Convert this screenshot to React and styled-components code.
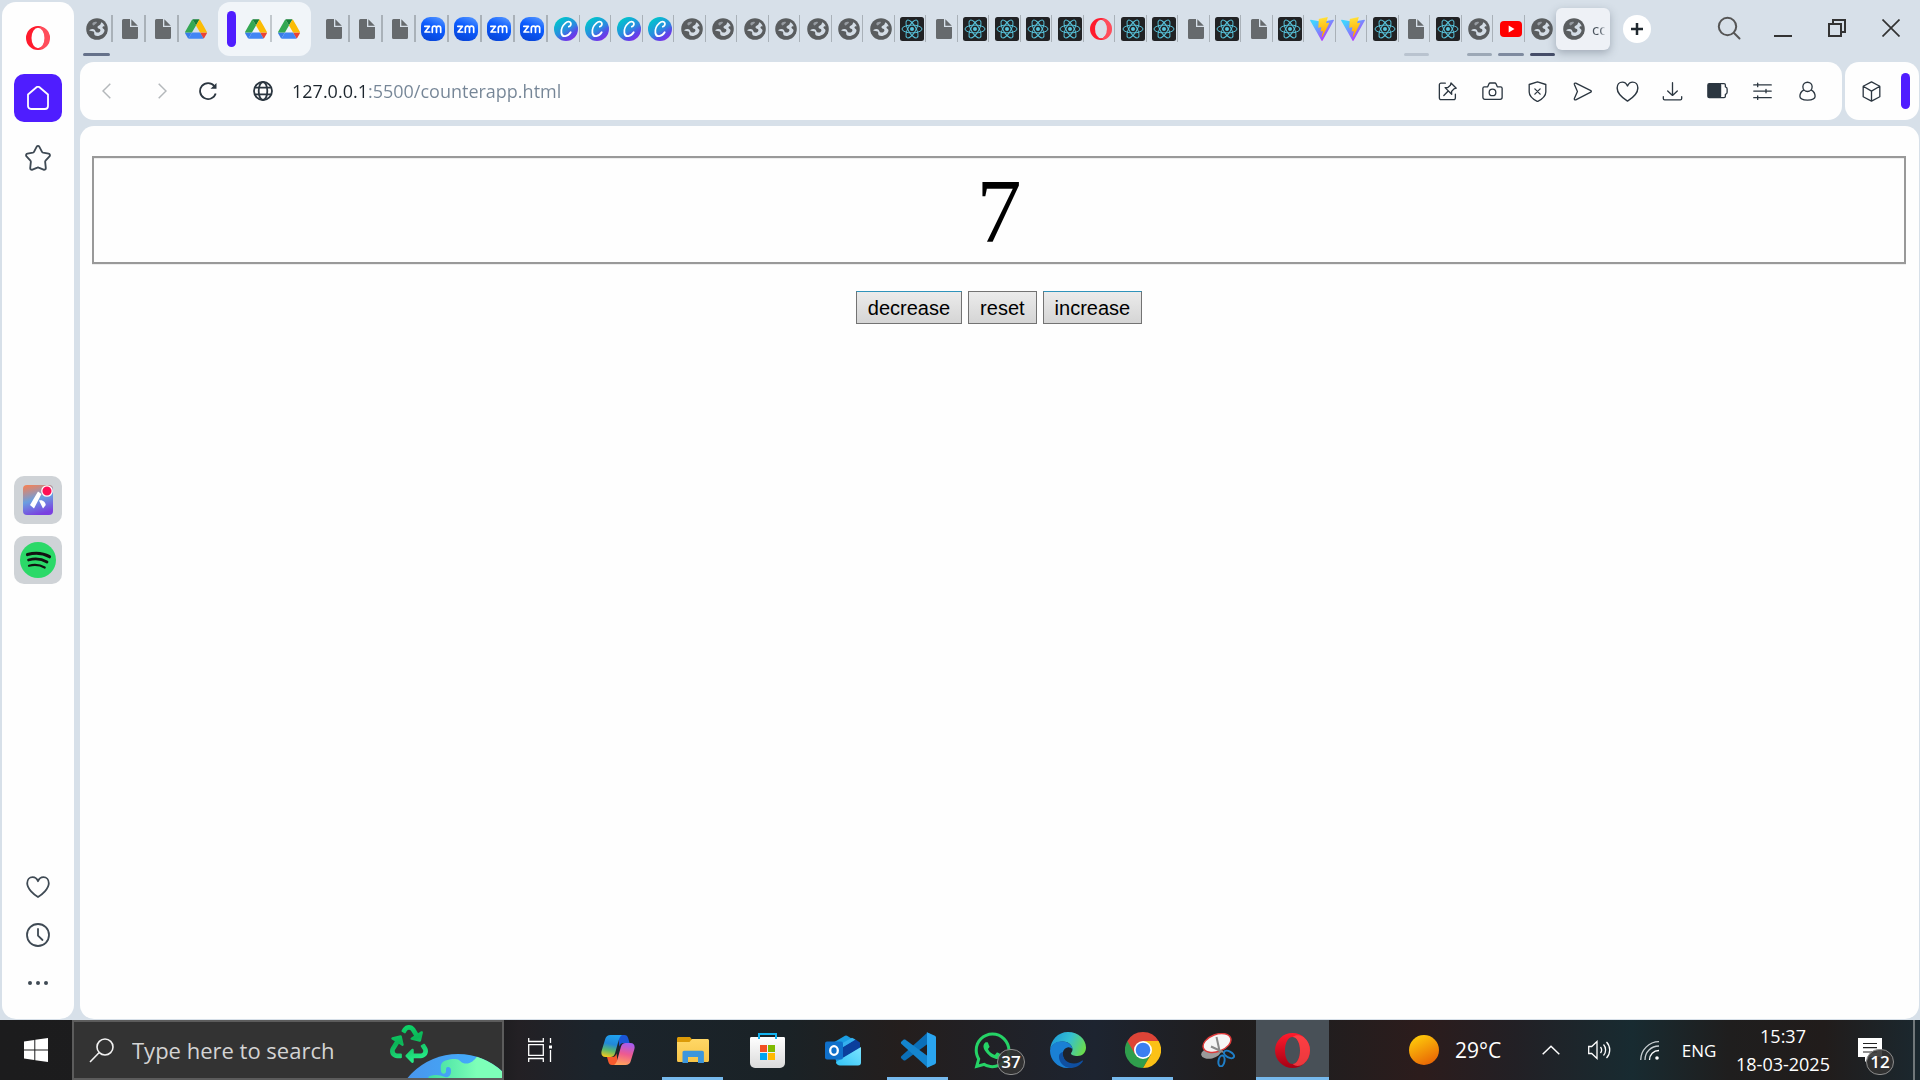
import React, { useState } from "react";
import styled, { createGlobalStyle, css } from "styled-components";
import { FaWhatsapp, FaRecycle } from "react-icons/fa";

const ui = `"Open Sans", "Noto Sans", sans-serif`;
const ink = "#2b3640";

const GlobalStyle = createGlobalStyle`
  * { box-sizing: border-box; }
  body { margin: 0; font-family: ${ui}; }
  button, input { margin: 0; padding: 0; border: 0; background: none; font: inherit; color: inherit; }
  svg { display: block; flex: none; }
`;

/* ---------- layout ---------- */
const Screen = styled.div`
  display: flex;
  flex-direction: column;
  height: 100vh;
  overflow: hidden;
`;
const BrowserWindow = styled.div`
  flex: 1;
  min-height: 0;
  display: flex;
  gap: 6px;
  padding: 0 1px 1px 2px;
  background: #d7e0e9;
`;
const Sidebar = styled.nav`
  flex: 0 0 72px;
  display: flex;
  flex-direction: column;
  justify-content: space-between;
  margin-top: 2px;
  padding: 12px 0;
  border-radius: 14px;
  background: #fefefe;
`;
const SideGroup = styled.div`
  display: flex;
  flex-direction: column;
  align-items: center;
  gap: ${(p) => p.$gap || 0}px;
  padding-top: ${(p) => p.$top || 0}px;
`;
const SideButton = styled.button`
  display: grid;
  place-items: center;
  width: 48px;
  height: 48px;
  border-radius: 10px;
  color: #3f4a54;
  background: ${(p) => p.$fill || "transparent"};
`;
const MainColumn = styled.div`
  flex: 1;
  min-width: 0;
  display: flex;
  flex-direction: column;
`;

/* ---------- tab strip ---------- */
const TitleBar = styled.header`
  display: flex;
  align-items: flex-start;
  height: 62px;
  padding-right: 1px;
`;
const Tabs = styled.div`
  flex: ${(p) => (p.$grow ? 1 : "none")};
  min-width: 0;
  display: flex;
`;
const Tab = styled.button`
  display: flex;
  flex-direction: column;
  justify-content: space-between;
  height: 56px;
  padding-top: 15px;
  ${(p) => (p.$narrow ? css`flex: 1; min-width: 0;` : css`width: 33px;`)}
`;
const TabFace = styled.span`
  display: grid;
  place-items: center;
  align-self: stretch;
  height: 27px;
  padding-left: ${(p) => (p.$narrow ? 5 : 3)}px;
  border-right: ${(p) => (p.$narrow ? 1 : 2)}px solid ${(p) => (p.$divider ? "#a9b1b8" : "transparent")};
`;
const TabLine = styled.span`
  height: 3px;
  align-self: stretch;
  margin-left: ${(p) => (p.$narrow ? 5 : 3)}px;
  margin-right: ${(p) => (p.$narrow ? 1 : 3)}px;
  border-radius: 2px;
  background: ${(p) => p.$tone || "transparent"};
`;
const Island = styled.div`
  flex: none;
  display: flex;
  align-items: flex-start;
  height: 54px;
  margin: 2px 6px 0;
  padding: 0 5px 0 9px;
  border-radius: 12px;
  background: #f1f5f9;
`;
const IslandTab = styled.button`
  display: grid;
  place-items: center;
  width: ${(p) => (p.$divider ? 36 : 34)}px;
  height: 27px;
  margin-top: 13px;
  ${(p) => p.$divider && css`padding-left: 6px; border-right: 2px solid #c2c8cd;`}
`;
const Grip = styled.span`
  flex: none;
  width: 9px;
  height: 36px;
  margin-top: ${(p) => p.$top || 0}px;
  border-radius: 5px;
  background: #4f1dff;
`;
const ActiveTab = styled.button`
  flex: none;
  display: flex;
  align-items: center;
  gap: 7px;
  width: 54px;
  height: 42px;
  margin-top: 8px;
  padding: 0 0 0 7px;
  border-radius: 6px;
  background: #eef1f6;
  box-shadow: 0 3px 8px rgba(60, 72, 90, 0.35);
`;
const TabTitle = styled.span`
  flex: 1;
  min-width: 0;
  white-space: nowrap;
  text-align: left;
  font-size: 15px;
  color: #4a545e;
  mask-image: linear-gradient(90deg, #000 45%, transparent 75%);
`;
const NewTab = styled.button`
  flex: none;
  display: grid;
  place-items: center;
  width: 28px;
  height: 28px;
  margin: 15px 51px 0 13px;
  border-radius: 50%;
  background: #fff;
`;
const WindowButton = styled.button`
  flex: none;
  display: grid;
  place-items: center;
  width: 54px;
  height: 56px;
`;

/* ---------- address bar ---------- */
const Bars = styled.div`
  display: flex;
  gap: 3px;
  height: 58px;
  margin-bottom: 6px;
`;
const Bar = styled.div`
  flex: ${(p) => (p.$grow ? 1 : "none")};
  min-width: 0;
  display: flex;
  align-items: center;
  gap: ${(p) => (p.$grow ? 0 : 4)}px;
  padding-right: ${(p) => (p.$grow ? 12 : 9)}px;
  border-radius: 14px;
  background: #fefefe;
  color: ${ink};
`;
const BarButton = styled.button`
  flex: none;
  display: grid;
  place-items: center;
  width: ${(p) => p.$w || 45}px;
  height: 45px;
`;
const AddressField = styled.div`
  flex: 1;
  min-width: 0;
  display: flex;
  align-items: center;
  gap: 6px;
  margin-left: 16px;
`;
const Address = styled.input`
  flex: 1;
  min-width: 0;
  height: 40px;
  outline: 0;
  font-size: 18px;
  color: #758596;
  background: linear-gradient(90deg, #1c252d 72px, #758596 72px);
  -webkit-background-clip: text;
  background-clip: text;
  -webkit-text-fill-color: transparent;
`;

/* ---------- web page ---------- */
const Page = styled.main`
  flex: 1;
  min-height: 0;
  padding: 30px 13px 30px 12px;
  border-radius: 14px;
  background: #fefefe;
  font-family: "Liberation Serif", serif;
  text-align: center;
`;
const Counter = styled.output`
  display: block;
  height: 108px;
  padding-top: 4px;
  border: 2px solid #999;
  box-shadow: 0 1px 0 #eee, inset 0 1px 0 #eee;
  font-size: 90px;
  line-height: 100px;
  color: #000;
`;
const Actions = styled.div`
  display: flex;
  justify-content: center;
  gap: 6px;
  margin-top: 27px;
`;
const ActionButton = styled.button`
  height: 33px;
  padding: 0 11px;
  border: 1px solid #737373;
  border-top-color: ${(p) => (p.$lit ? "#2f93bb" : "#737373")};
  background: linear-gradient(#ebebeb, #d5d5d5);
  font-family: "Liberation Sans", sans-serif;
  font-size: 20px;
  line-height: 30px;
  color: #000;
`;

/* ---------- taskbar ---------- */
const Taskbar = styled.footer`
  flex: 0 0 60px;
  display: flex;
  align-items: stretch;
  color: #fff;
  background: linear-gradient(
    90deg, #1c1c1d 0, #1d1d1f 26%, #232024 27%, #1b242c 31%, #1a2226 41%, #241e1d 47%,
    #1d2430 57%, #201d1d 64%, #1f1e1f 68%, #2c1c1c 74%, #222025 79%, #182b31 85%,
    #1f1e1e 90%, #211c1b 95%, #1b282f 100%
  );
`;
const TaskButton = styled.button`
  flex: none;
  display: grid;
  place-items: center;
  position: relative;
  width: ${(p) => p.$w || 75}px;
  background: ${(p) => (p.$active ? "#485057" : "none")};
  background-clip: padding-box;
  border: 0 solid transparent;
  border-width: 0 1px;
  &::after {
    content: "";
    display: ${(p) => (p.$running ? "block" : "none")};
    position: absolute;
    bottom: 0;
    left: ${(p) => (p.$active ? 0 : 6)}px;
    right: ${(p) => (p.$active ? 0 : 6)}px;
    height: 3px;
    background: #76b9ed;
  }
`;
const TaskList = styled.div`
  display: flex;
  padding-left: 4px;
`;
const SearchBox = styled.label`
  flex: none;
  display: flex;
  align-items: center;
  width: 432px;
  padding-left: 15px;
  border: 2px solid #5c5c5c;
  background: #333;
`;
const SearchInput = styled.input`
  flex: 1;
  min-width: 0;
  margin-left: 18px;
  outline: 0;
  font-size: 22px;
  color: #fff;
  &::placeholder { color: #d4d4d4; opacity: 1; }
`;
const CountBadge = styled.span`
  position: absolute;
  right: ${(p) => p.$right}px;
  bottom: 5px;
  display: grid;
  place-items: center;
  width: 28px;
  height: 26px;
  border: 1px solid #8d8d8d;
  border-radius: 13px;
  background: #333333e6;
  font-size: 17px;
  font-weight: 600;
  line-height: 20px;
`;
const Tray = styled.div`
  flex: 1;
  display: flex;
  justify-content: flex-end;
  align-items: stretch;
`;
const TrayButton = styled.button`
  flex: none;
  display: flex;
  align-items: center;
  justify-content: center;
  position: relative;
  gap: 16px;
  width: ${(p) => p.$w}px;
  font-size: ${(p) => p.$size || 17}px;
  white-space: nowrap;
`;
const Clock = styled(TrayButton)`
  flex-direction: column;
  gap: 4px;
  line-height: 24px;
`;
const ShowDesktop = styled.button`
  width: 7px;
  margin-left: 22px;
  border-left: 2px solid #70777a;
`;
const Defs = styled.svg`
  position: absolute;
  width: 0;
  height: 0;
`;

/* ---------- favicons ---------- */
const Globe = () => (
  <svg width="22" height="22" viewBox="0 0 22 22">
    <circle cx="11" cy="11" r="10.8" fill="#5a5d5f" />
    <path d="M2 10.500c2.200-1 5.200-.9 6.600.3 1 .9.600 2.300 2.200 2.700 1.800.4 3-.6 2.800-1.900-.2-1.400-2.800-.9-3.200-2.400-.3-1.500 1.200-2.100 2.400-2.700 1.100-.7.8-2.100 1.900-2.900-2.500-1.300-6-1.100-8.200.7l-1 2.200C3.500 7.200 2.200 8.800 2 10.500z" fill="#5a5d5f" />
    <path d="M3 12.200c2.400-1.400 4.600-1.400 5.600-.4.900.9.500 2.200 2.200 2.600 2.200.5 3.800-.8 3.600-2.500-.2-1.600-2.600-1.200-2.900-2.500-.2-1.200 1.300-1.600 2.300-2.300 1-.8.9-2.100 1.600-2.900 1.600.9 2.800 2.400 3.400 4.200-1.500-.3-2.500.3-2.300 1.300.3 1.100 2.300 1.300 2 3-.6 2.900-3.800 5.200-7.300 5.300-1.700 0-2.700-.6-2.900-1.700-.3-1.200.3-1.900-.7-2.700-1-.8-3.500-.2-4.600-1.400z" fill="#d3dce5" />
    <path d="M7 4.500c1.300-.9 3.200-1.100 3.800-.5.500.6-.3 1.400-1.300 1.900-1 .4-1.200 1.500-2.100 1.500-1 0-1.500-1.900-.4-2.900z" fill="#d3dce5" opacity=".5" />
  </svg>
);
const Doc = () => (
  <svg width="16" height="20" viewBox="0 0 16 20">
    <path d="M1.500 0H8v8h8v10.500A1.500 1.500 0 0 1 14.500 20h-13A1.500 1.500 0 0 1 0 18.500v-17A1.500 1.500 0 0 1 1.500 0z" fill="#666a6d" />
    <path d="M9.300 0.300 15.800 6.800H9.300z" fill="#666a6d" />
  </svg>
);
const Drive = () => (
  <svg width="22" height="20" viewBox="0 0 87.3 78">
    <path d="m6.600 66.850 3.850 6.650c.8 1.400 1.950 2.500 3.300 3.300L27.500 53H0c0 1.550.4 3.100 1.200 4.500z" fill="#3a7de8" />
    <path d="M43.650 25 29.900 1.200c-1.350.8-2.500 1.900-3.300 3.300l-25.400 44A9.060 9.060 0 0 0 0 53h27.500z" fill="#34a853" />
    <path d="M73.550 76.800c1.350-.8 2.500-1.900 3.300-3.300l1.600-2.750L86.100 57.500c.8-1.400 1.200-2.950 1.200-4.500H59.798l5.852 11.500z" fill="#ea4335" />
    <path d="M43.650 25 57.400 1.200C56.050.4 54.500 0 52.900 0H34.400c-1.600 0-3.150.45-4.500 1.200z" fill="#188038" />
    <path d="M59.800 53H27.500L13.750 76.800c1.350.8 2.900 1.200 4.500 1.200h50.800c1.600 0 3.150-.45 4.500-1.200z" fill="#4285f4" />
    <path d="M73.400 26.500 60.700 4.500c-.8-1.400-1.950-2.500-3.300-3.300L43.650 25 59.800 53h27.450c0-1.550-.4-3.100-1.200-4.500z" fill="#fbbc04" />
  </svg>
);
const Zoom = () => (
  <svg width="24" height="24" viewBox="0 0 24 24">
    <rect width="24" height="24" rx="9" fill="url(#zoomBlue)" />
    <path d="M3.800 9.300h4.700L4 15h4.800M11.300 15.300v-4a2 2 0 0 1 4.200 0v4M15.500 11.300a2 2 0 0 1 4.200 0v4" fill="none" stroke="#fff" strokeWidth="1.700" strokeLinejoin="round" strokeLinecap="round" />
  </svg>
);
const Canva = () => (
  <svg width="24" height="24" viewBox="0 0 24 24">
    <circle cx="12" cy="12" r="12" fill="url(#canvaFill)" />
    <path d="M14.800 9.700c1.700-.5 2.600-2.500 1.900-3.900-.8-1.500-3.200-1.500-5.300.3-2.700 2.300-4.600 6.600-4 9.900.4 2.300 1.900 3.400 3.900 3.100 2.200-.3 4.200-1.900 5.400-3.900" fill="none" stroke="#fff" strokeWidth="1.800" strokeLinecap="round" />
  </svg>
);
const ReactLogo = () => (
  <svg width="24" height="24" viewBox="0 0 24 24">
    <rect width="24" height="24" rx="2.500" fill="#212224" />
    <g fill="none" stroke="#58c4dc" strokeWidth="1">
      <ellipse cx="12" cy="12" rx="10" ry="3.900" />
      <ellipse cx="12" cy="12" rx="10" ry="3.900" transform="rotate(60 12 12)" />
      <ellipse cx="12" cy="12" rx="10" ry="3.900" transform="rotate(120 12 12)" />
    </g>
    <circle cx="12" cy="12" r="2" fill="#58c4dc" />
  </svg>
);
const OperaRing = ({ size = 22 }) => (
  <svg width={size} height={size} viewBox="0 0 24 24">
    <path fillRule="evenodd" fill="#ff1b2d" d="M12 0a12 12 0 1 0 0 24 12 12 0 1 0 0-24zM12 1.800a6.500 10.200 0 1 1 0 20.400 6.500 10.200 0 1 1 0-20.400z" />
    <path d="M13 1.500c2.600-.9 5-.2 6.900 1.600A11.800 11.800 0 0 1 24 12a11.800 11.800 0 0 1-4.100 8.900c-1.900 1.800-4.300 2.500-6.900 1.600 3-1 5.500-5.300 5.500-10.500S16 2.500 13 1.500z" fill="#fff" opacity=".22" />
  </svg>
);
const Vite = () => (
  <svg width="24" height="24" viewBox="0 0 256 257">
    <path fill="url(#vitePurple)" d="M255.153 37.938 134.897 252.976c-2.483 4.440-8.862 4.466-11.382.048L.875 37.958c-2.746-4.814 1.371-10.646 6.827-9.670l120.385 21.517a6.537 6.537 0 0 0 2.322-.004l117.867-21.483c5.438-.991 9.574 4.796 6.877 9.620Z" />
    <path fill="url(#viteGold)" d="M185.432.063 96.440 17.501a3.268 3.268 0 0 0-2.634 3.014l-5.474 92.456a3.268 3.268 0 0 0 3.997 3.378l24.777-5.718c2.318-.535 4.413 1.507 3.936 3.838l-7.361 36.047c-.495 2.426 1.782 4.500 4.151 3.780l15.304-4.649c2.372-.72 4.652 1.360 4.150 3.788l-11.698 56.621c-.732 3.542 3.979 5.473 5.943 2.437l1.313-2.028 72.516-144.720c1.215-2.423-.88-5.186-3.540-4.672l-25.505 4.922c-2.396.462-4.435-1.770-3.759-4.114l16.646-57.705c.677-2.350-1.370-4.583-3.769-4.113Z" />
  </svg>
);
const YouTube = () => (
  <svg width="22" height="16" viewBox="0 0 22 16">
    <rect width="22" height="16" rx="4" fill="#f00" />
    <path d="m8.700 4.600 5.800 3.400-5.800 3.400z" fill="#fff" />
  </svg>
);

const favicons = { globe: Globe, doc: Doc, drive: Drive, zoom: Zoom, canva: Canva, react: ReactLogo, opera: OperaRing, vite: Vite, youtube: YouTube };

/* ---------- line icons ---------- */
const Line = ({ s = 24, w = 1.5, children, color = "currentColor" }) => (
  <svg width={s} height={s} viewBox="0 0 24 24" fill="none" stroke={color} strokeWidth={w} strokeLinecap="round" strokeLinejoin="round">
    {children}
  </svg>
);
const HeartPath = <path d="M12 22C8 19.500 1.200 13.800 1.200 8.300 1.200 4.800 3.500 2.200 6.600 2.200c2.400 0 4.300 1.400 5.400 4 1.100-2.600 3-4 5.400-4 3.100 0 5.400 2.600 5.400 6.100C22.800 13.800 16 19.500 12 22z" />;

const tools = [
  ["Pin this page", <Line><path d="M9.500 2.500h-5A1.800 1.800 0 0 0 2.700 4.300v15.200a1.800 1.800 0 0 0 1.800 1.800h14.700a1.800 1.800 0 0 0 1.800-1.800V15M16 2.200l6 6-2.600.8-2.800 3 .2 3.200-7.600-7.600 3.200-.2 2.900-2.500zM12.800 11.500l-5 5" /></Line>],
  ["Snapshot", <Line><path d="M1 8.300a1.700 1.700 0 0 1 1.700-1.600h3.800L8 3.200A1.500 1.500 0 0 1 9.300 2.300h5.400A1.500 1.500 0 0 1 16 3.200l1.500 3.500h3.800A1.700 1.700 0 0 1 23 8.300v10.400a2.300 2.300 0 0 1-2.300 2.300H3.300A2.300 2.300 0 0 1 1 18.700z" /><circle cx="12" cy="13" r="3.800" /></Line>],
  ["Ad blocker", <Line><path d="M12 1 21.500 4v8.500c0 5-3.800 8-9.500 11-5.700-3-9.500-6-9.500-11V4zM9 9l6 6M15 9l-6 6" /></Line>],
  ["Share", <Line><path d="M4.300 2.500 21.500 11a1 1 0 0 1 0 1.800L4.300 21.500c-1 .5-2-.4-1.600-1.400L6.200 12 2.700 3.900c-.4-1 .6-1.900 1.600-1.400z" /></Line>],
  ["Add to favourites", <Line s={23}>{HeartPath}</Line>],
  ["Downloads", <Line><path d="M12 2v14M6.500 11.500l5.500 5 5.500-5M1.500 18v2a1.500 1.500 0 0 0 1.500 1.500h18a1.500 1.500 0 0 0 1.500-1.500v-2" /></Line>],
  ["Battery saver", <Line><rect x="1" y="3" width="14.500" height="16" rx="1.500" fill="currentColor" /><path d="M15 3h4.500A1.500 1.500 0 0 1 21 4.500V6.700c1.200.3 2 1.200 2 2.400v3.800c0 1.200-.8 2.100-2 2.400v2.200a1.500 1.500 0 0 1-1.500 1.500H15" /></Line>],
  ["Easy setup", <Line><path d="M2 4.500h20M2 11.500h20M2 19h20M6.500 2.500v4M16 9.500v4M6.500 17v4" /></Line>],
  ["Profile", <Line><circle cx="12" cy="6.700" r="5.300" /><path d="M7.500 10.500C5 12 3.300 14.800 3.300 17.500c0 3 2.500 4.300 8.700 4.300s8.700-1.300 8.700-4.300c0-2.700-1.700-5.500-4.200-7" /></Line>],
];

/* ---------- taskbar artwork ---------- */
const TaskView = () => (
  <svg width="24" height="24" viewBox="0 0 24 24" fill="none" stroke="#fff" strokeWidth="1.300">
    <path d="M.7 0v3.500h14.600V0M.7 6.700h14.600v10.600H.7zM.7 24v-3.500h14.600V24M22.500 0v5M22.500 12v12" />
    <path d="M21 7.500h3v3h-3z" fill="#fff" stroke="none" />
  </svg>
);
const Copilot = () => (
  <svg width="34" height="32" viewBox="0 0 34 32">
    <path d="M17 1h6.500c2 0 3 1 3.600 3l1.500 5h-6c-2.500 0-3.700 1.500-4.300 3.700z" fill="#1a56d6" />
    <path d="M9.500 1H21c-1.800 1-2.700 3-3.400 5.500l-3.400 12.300C13.300 22 12 23 9.300 23H4.500C1 23-.2 20 .6 17L4.300 4.800C5 2.300 6.800 1 9.500 1z" fill="url(#copilotA)" />
    <path d="M17 31H11c-2 0-3-1-3.600-3L6 23h5.300c2.500 0 3.600-1.500 4.200-3.700z" fill="#f65a2d" />
    <path d="M24.500 31H13c1.800-1 2.700-3 3.400-5.500l3.400-12.300C20.700 10 22 9 24.700 9h4.800c3.500 0 4.700 3 3.900 6l-3.700 12.200c-.7 2.500-2.500 3.800-5.200 3.800z" fill="url(#copilotB)" />
  </svg>
);
const Explorer = () => (
  <svg width="32" height="27" viewBox="0 0 32 27">
    <path d="M0 1.500C0 .7.700 0 1.500 0H13l2 2.500-2 3H0z" fill="#dc9a08" />
    <path d="M0 5h12.500L15 2h15.500c.8 0 1.500.7 1.500 1.500v20c0 .8-.7 1.500-1.500 1.500h-29A1.500 1.500 0 0 1 0 23.500z" fill="url(#folder)" />
    <path d="M5.500 26V15.500c0-1 .7-1.700 1.700-1.700h18c1 0 1.700.7 1.700 1.700V26H21v-6H11v6z" fill="#3c96dc" />
  </svg>
);
const Store = () => (
  <svg width="35" height="35" viewBox="0 0 35 35">
    <path d="M9 8V1h17v7" fill="none" stroke="#14b3ef" strokeWidth="2" />
    <path d="M0 5.500C0 4.500.5 4 1.500 4h32c1 0 1.500.5 1.500 1.500V30a5 5 0 0 1-5 5H5a5 5 0 0 1-5-5z" fill="url(#bag)" />
    <path d="M9 1v5M26 1v5" stroke="#14b3ef" strokeWidth="2" />
    <path d="M10 12h7v7h-7z" fill="#f25022" /><path d="M18 12h7v7h-7z" fill="#7fba00" />
    <path d="M10 20h7v7h-7z" fill="#00a4ef" /><path d="M18 20h7v7h-7z" fill="#ffb900" />
  </svg>
);
const Outlook = () => (
  <svg width="36" height="31" viewBox="0 0 36 31">
    <path d="M6 9 20 .8a2 2 0 0 1 2 0L34 8v17L12 29z" fill="#1b9de2" />
    <path d="M18 12 30.500 4.500 35 7.500V13L18 23z" fill="#0b3f9c" />
    <path d="M18 12 30.500 4.500 27 2.700 14 10z" fill="#35b0ee" />
    <path d="M11 27 36 12v15.500c0 2-1 3-3 3H15c-2 0-4-1.500-4-3.500z" fill="url(#mail)" />
    <rect y="6.500" width="18" height="18" rx="2" fill="#1070ca" />
    <ellipse cx="9" cy="15.500" rx="3.800" ry="4.400" fill="none" stroke="#fff" strokeWidth="2.300" />
  </svg>
);
const VSCode = () => (
  <svg width="36" height="36" viewBox="0 0 36 36">
    <path d="M35 5 27.500.5 1.500 24c-.8.8-.8 1.700 0 2.500l2 1.700c.6.5 1.400.5 2 .1L35 6.500z" fill="#0b6fb8" />
    <path d="M35 31 27.500 35.500 1.500 12c-.8-.8-.8-1.700 0-2.500l2-1.700c.6-.5 1.400-.5 2-.1L35 29.500z" fill="#1485cf" />
    <path d="m27.500 35.500 7.400-3.300c.7-.3 1.100-.9 1.100-1.700v-25c0-.8-.4-1.400-1.100-1.700L27.500.5c-.8-.4-1-.3-.5.700v33.500c-.4 1-.2 1.200.5.800z" fill="#2aa5f0" />
  </svg>
);
const Edge = () => (
  <svg width="36" height="36" viewBox="0 0 36 36">
    <path d="M.2 18C.5 8 8 0 18 0c10.500 0 18 7.500 18 15.500 0 5-3.700 8.500-8.500 8.500-4 0-6.500-1.300-6.500-2.500 0-1 1.500-1.500 1.500-4C22.500 13 18 9.500 12.500 9.500 6 9.500 1.500 13 .2 18z" fill="url(#edgeTop)" />
    <path d="M0 18.500C1 12.500 6 9.300 12 9.300c6 0 10.400 3.700 10.500 8.200-1-1.500-3-2.500-5-2-4 1-5.500 5-4.500 9 1.200 5 5.500 9 11 9.500-2 1.300-4 2-6.500 2C7.500 36 0 28 0 18.500z" fill="#1a80d4" />
    <path d="M13 20c-1 7 4.500 11.500 11 11.500 3.500 0 6.500-1.500 8.200-3 .5-.3 1 .2.700.7C30.500 33.200 25.500 36 20 36c-6.500-.5-11.500-6-11-12 .2-2 1.700-3.500 4-4z" fill="#0f4fa0" />
  </svg>
);
const Chrome = () => (
  <svg width="36" height="36" viewBox="0 0 36 36">
    <path d="M18 18 2.400 9A18 18 0 0 0 18 36l7.800-13.500z" fill="#2f9e4c" />
    <path d="M18 18 25.800 22.500 18 36A18 18 0 0 0 33.600 9H18z" fill="#fbc116" />
    <path d="M18 0A18 18 0 0 0 2.400 9l7.800 13.500L18 9h15.600A18 18 0 0 0 18 0z" fill="#dd4437" />
    <circle cx="18" cy="18" r="9" fill="#fff" /><circle cx="18" cy="18" r="7.300" fill="#3b7ff0" />
  </svg>
);
const Snip = () => (
  <svg width="34" height="34" viewBox="0 0 34 34">
    <ellipse cx="10" cy="20" rx="10" ry="5.500" transform="rotate(-12 10 20)" fill="#9b9b9b" />
    <ellipse cx="16" cy="10" rx="14.500" ry="8.500" transform="rotate(-20 16 10)" fill="#f5f5f5" stroke="#dc3a3a" strokeWidth="1.500" />
    <path d="M15.500 4 19 20M10 13.500 22 19" stroke="#8a8a8a" strokeWidth="2" />
    <ellipse cx="28" cy="21.500" rx="5.500" ry="3" transform="rotate(28 28 21.500)" fill="none" stroke="#1f7ec6" strokeWidth="2" />
    <ellipse cx="20.500" cy="28" rx="3" ry="5.500" transform="rotate(10 20.500 28)" fill="none" stroke="#1f7ec6" strokeWidth="2" />
  </svg>
);
const OperaBig = () => (
  <svg width="35" height="35" viewBox="0 0 35 35">
    <path fillRule="evenodd" fill="url(#operaRed)" d="M17.500 0a17.500 17.500 0 1 0 0 35 17.500 17.500 0 1 0 0-35zM17.500 4c4.500 0 7.500 6 7.500 13.500S22 31 17.500 31 10 25 10 17.500 13 4 17.500 4z" />
    <path d="M17.500 4c3-2.500 7-2.500 11 0A17.500 17.500 0 0 1 35 17.500 17.500 17.500 0 0 1 28.500 31c-4 2.500-8 2.500-11 0 4.500 0 7.500-6 7.500-13.500S22 4 17.500 4z" fill="#ff4b4b" opacity=".75" />
  </svg>
);
const WhatsApp = () => <FaWhatsapp size={41} color="#25d366" />;
const Earth = () => (
  <svg width="116" height="56" viewBox="0 0 116 56">
    <clipPath id="disc"><circle cx="72" cy="97" r="65" /></clipPath>
    <g transform="translate(4 3) scale(.0742)">
      <FaRecycle size={512} x="0" y="0" style={{ fill: "url(#recycle)" }} />
    </g>
    <g clipPath="url(#disc)">
      <rect width="116" height="56" fill="url(#sea)" />
      <path d="M91 34.500C88 39 83 43 77 41c-3-1-3-4-8-4-6 0-12 2-13 4-2 2-1 8-1 8 0 3 5 4 5 0 0-3 0-4 2-4s3 1 3 4c0 5-3 7-6 6-5-2-10-3-15-1-3 1-1 4-1 6h80V30z" fill="url(#land)" />
    </g>
  </svg>
);

const tasks = [
  ["Copilot", Copilot],
  ["File Explorer", Explorer, true],
  ["Microsoft Store", Store],
  ["Outlook", Outlook],
  ["Visual Studio Code", VSCode, true],
  ["WhatsApp", WhatsApp, false, "37"],
  ["Edge", Edge],
  ["Chrome", Chrome, true],
  ["Snipping Tool", Snip],
  ["Opera", OperaBig, true],
];

const firstTabs = ["globe", "doc", "doc", "drive"];
const midTabs = ["doc", "doc", "doc", "zoom", "zoom", "zoom", "zoom"];
const narrowTabs = [
  ...Array(4).fill("canva"), ...Array(7).fill("globe"),
  "react", "doc", "react", "react", "react", "react", "opera", "react", "react",
  "doc", "react", "doc", "react", "vite", "vite", "react", "doc", "react", "globe", "youtube", "globe",
];
const narrowLines = { 27: "#b9c3cf", 29: "#9ca8b6", 30: "#7e8a9f", 31: "#454d68" };

function TabButton({ kind, narrow, divider = true, tone }) {
  const Icon = favicons[kind];
  return (
    <Tab type="button" aria-label={kind + " tab"} $narrow={narrow}>
      <TabFace $narrow={narrow} $divider={divider}><Icon /></TabFace>
      <TabLine $narrow={narrow} $tone={tone} />
    </Tab>
  );
}

const Stops = ({ id, list, ...rest }) => (
  <linearGradient id={id} {...rest}>
    {list.map(([o, c]) => <stop key={o} offset={o} stopColor={c} />)}
  </linearGradient>
);
const Gradients = () => (
  <Defs aria-hidden="true">
    <defs>
      <Stops id="zoomBlue" x1="0.300" y1="1" x2="0.700" y2="0" list={[[0, "#0845d8"], [0.6, "#0b5cff"], [1, "#4d90ff"]]} />
      <Stops id="canvaFill" x1="0.200" y1="0.100" x2="0.800" y2="1" list={[[0, "#00c4cc"], [0.5, "#2b8be0"], [0.75, "#5a46e8"], [1, "#8a2be8"]]} />
      <Stops id="vitePurple" x1="0" y1="0.300" x2="0.600" y2="1" list={[[0, "#41d1ff"], [1, "#bd34fe"]]} />
      <Stops id="viteGold" x1="0.400" y1="0" x2="0.500" y2="0.900" list={[[0, "#ffea83"], [0.1, "#ffdd35"], [1, "#ffa800"]]} />
      <Stops id="copilotA" x1="0.500" y1="0" x2="0.300" y2="1" list={[[0, "#1fa0ee"], [0.4, "#2288d8"], [0.7, "#5bb86b"], [1, "#f2c81e"]]} />
      <Stops id="copilotB" x1="0.600" y1="0" x2="0.400" y2="1" list={[[0, "#a45cf0"], [0.5, "#ee5a90"], [1, "#ffa35c"]]} />
      <Stops id="folder" x1="0" y1="0" x2="0" y2="1" list={[[0, "#ffd766"], [1, "#f7c548"]]} />
      <Stops id="bag" x1="0" y1="0" x2="0" y2="1" list={[[0, "#ffffff"], [1, "#dadada"]]} />
      <Stops id="mail" x1="0" y1="1" x2="1" y2="0" list={[[0, "#33c3f5"], [1, "#7ce4ff"]]} />
      <Stops id="edgeTop" x1="0" y1="0.300" x2="1" y2="0.600" list={[[0, "#1c9ad8"], [0.5, "#35bfd0"], [1, "#6bdc4c"]]} />
      <Stops id="operaRed" x1="0" y1="0" x2="0" y2="1" list={[[0, "#ff1b2d"], [1, "#a70014"]]} />
      <Stops id="recycle" x1="0" y1="0" x2="0.300" y2="1" list={[[0, "#0fe070"], [0.5, "#0bb457"], [1, "#25e884"]]} />
      <Stops id="sea" x1="0" y1="0" x2="1" y2="0" list={[[0, "#4a8fe8"], [1, "#41b4ff"]]} />
      <Stops id="land" x1="0" y1="0" x2="1" y2="0" list={[[0, "#3fdca0"], [0.6, "#7dffb8"], [1, "#7dffb8"]]} />
      <Stops id="sun" x1="0.200" y1="0" x2="0.700" y2="1" list={[[0, "#ffce0a"], [1, "#e86405"]]} />
      <Stops id="aria" x1="0.200" y1="0" x2="0.500" y2="1" list={[[0, "#f0825a"], [0.5, "#6a9fe0"], [1, "#7a3fe0"]]} />
    </defs>
  </Defs>
);

export default function App() {
  const [count, setCount] = useState(7);
  return (
    <Screen>
      <GlobalStyle />
      <Gradients />
      <BrowserWindow>
        <Sidebar aria-label="Browser sidebar">
          <SideGroup $gap={12}>
            <SideButton type="button" aria-label="Opera menu"><OperaRing size={24} /></SideButton>
            <SideButton type="button" aria-label="Home" $fill="#4f1dff">
              <Line s={24} w={1.8} color="#fff"><path d="M2 8.500 10.500 1.300a2.200 2.200 0 0 1 3 0L22 8.500V20a3 3 0 0 1-3 3H5a3 3 0 0 1-3-3z" /></Line>
            </SideButton>
            <SideButton type="button" aria-label="Bookmarks">
              <Line s={26} w={1.700}><path d="M10.700 1.700c.6-1.100 2-1.100 2.600 0l2.400 4.600c.2.400.6.700 1 .8l5.100.9c1.200.2 1.600 1.600.8 2.500l-3.600 3.900c-.3.300-.4.700-.4 1.100l.6 5.700c.1 1.200-1 2-2.100 1.500l-4.500-1.800c-.4-.2-.8-.2-1.200 0l-4.500 1.800c-1.100.5-2.200-.3-2.100-1.500l.6-5.700c0-.4-.1-.8-.4-1.100L1.400 10.500c-.8-.9-.4-2.300.8-2.500l5.100-.9c.4-.1.800-.4 1-.8z" /></Line>
            </SideButton>
          </SideGroup>
          <SideGroup $gap={12} $top={14}>
            <SideButton type="button" aria-label="Aria" $fill="#cfd3d7">
              <svg width="30" height="30" viewBox="0 0 30 30" overflow="visible">
                <rect width="30" height="30" rx="4" fill="url(#aria)" />
                <path d="M15 6.500 18.500 9 11 23.500 7 20zM16 15.500c4-1 6.500 2 6.800 4.500L20 23.500z" fill="#fff" />
                <circle cx="24" cy="6" r="5.200" fill="#ff0f56" stroke="#fff" strokeWidth="1.300" />
              </svg>
            </SideButton>
            <SideButton type="button" aria-label="Spotify" $fill="#cfd3d7">
              <svg width="36" height="36" viewBox="0 0 36 36">
                <circle cx="18" cy="18" r="18" fill="#2bd968" />
                <path d="M7.500 12.500c8-2.200 15.500-1.500 22 2.200" stroke="#121212" strokeWidth="3.200" strokeLinecap="round" fill="none" />
                <path d="M8.500 18c6.500-1.800 13-1.200 18.500 2" stroke="#121212" strokeWidth="2.700" strokeLinecap="round" fill="none" />
                <path d="M9 23.700c5.500-1.400 11-.9 15.700 1.800" stroke="#121212" strokeWidth="2.200" strokeLinecap="round" fill="none" />
              </svg>
            </SideButton>
          </SideGroup>
          <SideGroup>
            <SideButton type="button" aria-label="Pinboards"><Line s={24} w={1.800}>{HeartPath}</Line></SideButton>
            <SideButton type="button" aria-label="History"><Line s={24} w={1.800}><circle cx="12" cy="12" r="11" /><path d="M12 6v6.700l4.500 4.300" /></Line></SideButton>
            <SideButton type="button" aria-label="More">
              <svg width="20" height="4" viewBox="0 0 20 4" fill="#3f4a54"><circle cx="2" cy="2" r="2" /><circle cx="10" cy="2" r="2" /><circle cx="18" cy="2" r="2" /></svg>
            </SideButton>
          </SideGroup>
        </Sidebar>

        <MainColumn>
          <TitleBar>
            <Tabs>
              {firstTabs.map((k, i) => <TabButton key={i} kind={k} divider={i < 3} tone={i === 0 ? "#65718a" : undefined} />)}
            </Tabs>
            <Island>
              <Grip $top={9} />
              <IslandTab type="button" aria-label="drive tab" $divider><Drive /></IslandTab>
              <IslandTab type="button" aria-label="drive tab"><Drive /></IslandTab>
            </Island>
            <Tabs>{midTabs.map((k, i) => <TabButton key={i} kind={k} />)}</Tabs>
            <Tabs $grow>
              {narrowTabs.map((k, i) => <TabButton key={i} narrow kind={k} divider={i < 31} tone={narrowLines[i]} />)}
            </Tabs>
            <ActiveTab type="button"><Globe /><TabTitle>co</TabTitle></ActiveTab>
            <NewTab type="button" aria-label="New tab">
              <svg width="12" height="12" viewBox="0 0 12 12" stroke="#20292f" strokeWidth="2.500"><path d="M6 0v12M0 6h12" /></svg>
            </NewTab>
            <WindowButton type="button" aria-label="Search tabs"><Line s={24} w={2} color="#555"><circle cx="10.500" cy="10.500" r="8.700" /><path d="m17 17 5.500 5.500" /></Line></WindowButton>
            <WindowButton type="button" aria-label="Minimize"><svg width="18" height="18" viewBox="0 0 18 18"><path d="M0 17h18" stroke="#333" strokeWidth="2" /></svg></WindowButton>
            <WindowButton type="button" aria-label="Restore"><svg width="18" height="18" viewBox="0 0 18 18" fill="none" stroke="#333" strokeWidth="2"><path d="M1 5h12v12H1zM5 5V1h12v12h-4" /></svg></WindowButton>
            <WindowButton type="button" aria-label="Close"><svg width="18" height="18" viewBox="0 0 18 18" stroke="#333" strokeWidth="1.700"><path d="m.5.5 17 17M17.500.5l-17 17" /></svg></WindowButton>
          </TitleBar>

          <Bars>
            <Bar $grow>
              <BarButton type="button" aria-label="Back" $w={52}><svg width="9" height="16" viewBox="0 0 9 16" fill="none" stroke="#b4b8bb" strokeWidth="1.500"><path d="M8.300.7 1 8l7.300 7.300" /></svg></BarButton>
              <BarButton type="button" aria-label="Forward" $w={60}><svg width="9" height="16" viewBox="0 0 9 16" fill="none" stroke="#b4b8bb" strokeWidth="1.500"><path d="M.7.700 8 8 .7 15.300" /></svg></BarButton>
              <BarButton type="button" aria-label="Reload" $w={32}>
                <svg width="18" height="18" viewBox="0 0 18 18" fill="none" stroke={ink} strokeWidth="1.800"><path d="M16.700 11.500A8 8 0 1 1 15.300 4" /><path d="M17.500 1v5.800h-6z" fill={ink} stroke="none" /></svg>
              </BarButton>
              <AddressField>
                <BarButton type="button" aria-label="Site information" $w={46}>
                  <svg width="20" height="20" viewBox="0 0 20 20" fill="none" stroke={ink} strokeWidth="1.800"><circle cx="10" cy="10" r="9" /><ellipse cx="10" cy="10" rx="4.300" ry="9" /><path d="M2 6.700h16M2 13.300h16" /></svg>
                </BarButton>
                <Address aria-label="Address" defaultValue="127.0.0.1:5500/counterapp.html" />
              </AddressField>
              {tools.map(([label, icon]) => <BarButton key={label} type="button" aria-label={label}>{React.cloneElement(icon, { s: icon.props.s || 21 })}</BarButton>)}
            </Bar>
            <Bar>
              <BarButton type="button" aria-label="Extensions" $w={52}><Line s={21}><path d="M12 1 21.500 6v12L12 23 2.500 18V6zM2.500 6l9.500 5.500L21.500 6M12 11.500V23" /></Line></BarButton>
              <Grip />
            </Bar>
          </Bars>

          <Page>
            <Counter>{count}</Counter>
            <Actions>
              <ActionButton type="button" $lit onClick={() => setCount(count - 1)}>decrease</ActionButton>
              <ActionButton type="button" onClick={() => setCount(0)}>reset</ActionButton>
              <ActionButton type="button" $lit onClick={() => setCount(count + 1)}>increase</ActionButton>
            </Actions>
          </Page>
        </MainColumn>
      </BrowserWindow>

      <Taskbar>
        <TaskButton type="button" aria-label="Start" $w={72}>
          <svg width="24" height="24" viewBox="0 0 24 24" fill="#fff"><path d="M0 3.400 10.300 2v9.500H0zM11.300 1.800 24 0v11.500H11.300zM0 12.500h10.300V22L0 20.600zM11.300 12.500H24V24l-12.700-1.800z" /></svg>
        </TaskButton>
        <SearchBox>
          <svg width="25" height="25" viewBox="0 0 25 25" fill="none" stroke="#f2f2f2" strokeWidth="1.600"><circle cx="16" cy="9" r="8" /><path d="M10 14.800 1 24" /></svg>
          <SearchInput type="search" aria-label="Search Windows" placeholder="Type here to search" />
          <Earth />
        </SearchBox>
        <TaskButton type="button" aria-label="Task View" $w={72}><TaskView /></TaskButton>
        <TaskList>
          {tasks.map(([label, Icon, running, badge]) => (
            <TaskButton key={label} type="button" aria-label={label} $running={running} $active={label === "Opera"}>
              <Icon />
              {badge && <CountBadge $right={4}>{badge}</CountBadge>}
            </TaskButton>
          ))}
        </TaskList>
        <Tray>
          <TrayButton type="button" $w={132} $size={21}>
            <svg width="30" height="30" viewBox="0 0 30 30"><circle cx="15" cy="15" r="15" fill="url(#sun)" /></svg>
            29°C
          </TrayButton>
          <TrayButton type="button" aria-label="Show hidden icons" $w={60}><svg width="18" height="10" viewBox="0 0 18 10" fill="none" stroke="#fff" strokeWidth="1.500"><path d="m.7 9.300 8.300-8 8.300 8" /></svg></TrayButton>
          <TrayButton type="button" aria-label="Volume" $w={36}>
            <svg width="23" height="20" viewBox="0 0 23 20" fill="none" stroke="#fff" strokeWidth="1.300"><path d="M.7 6.500h3L9 1.500v17l-5.300-5h-3zM12.500 7c1.300 1.700 1.300 4.300 0 6M15.500 4.500c2.800 3 2.800 8 0 11M18.500 2c4.300 4.500 4.300 11.500 0 16" /></svg>
          </TrayButton>
          <TrayButton type="button" aria-label="Network" $w={64}>
            <svg width="19" height="19" viewBox="0 0 19 19" fill="none" strokeWidth="1.300"><g stroke="#c9cfd2"><path d="M.7 19C.7 9 9 .7 19 .7M5 19C5 11 11 5 19 5" /></g><path d="M9.500 19c0-5.500 4-9.500 9.500-9.500" stroke="#fff" /><circle cx="17" cy="17" r="1.800" fill="#fff" /></svg>
          </TrayButton>
          <TrayButton type="button" $w={36}>ENG</TrayButton>
          <Clock type="button" $w={132} $size={18}><span>15:37</span><span>18-03-2025</span></Clock>
          <TrayButton type="button" aria-label="Notifications" $w={42}>
            <svg width="24" height="24" viewBox="0 0 24 24"><path d="M0 0h24v19H12l-5 5v-5H0z" fill="#fff" /><path d="M5 5.500h14M5 9.700h14M5 14h14" stroke="#222" strokeWidth="1.200" /></svg>
            <CountBadge $right={-3}>12</CountBadge>
          </TrayButton>
          <ShowDesktop type="button" aria-label="Show desktop" />
        </Tray>
      </Taskbar>
    </Screen>
  );
}
